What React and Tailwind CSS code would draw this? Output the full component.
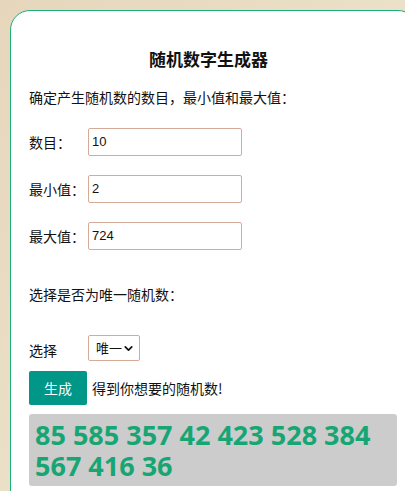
import { ChevronDown } from "lucide-react";

const ROWS = [
  { label: "数目：", value: "10" },
  { label: "最小值：", value: "2" },
  { label: "最大值：", value: "724" },
];

export default function App() {
  return (
    <div
      className="min-h-screen w-full overflow-hidden bg-gradient-to-br from-[#e6d6bc] via-[#ebe0c8] to-[#e4d5bb] pl-[10px] pt-[10px] text-[#111]"
      style={{ fontFamily: '"Noto Sans CJK SC", "Noto Sans", sans-serif' }}
    >
      <div className="w-[408px] rounded-[20px] border border-[#1dae7a] bg-white pb-10 pl-[18px] pr-[20px] pt-[36px]">
        <h1 className="pr-[9px] text-center text-[17px] font-bold leading-6">随机数字生成器</h1>
        <p className="mt-4 text-[14px] leading-5">确定产生随机数的数目，最小值和最大值：</p>

        <div className="mt-[21px] flex flex-col gap-[19px]">
          {ROWS.map((r) => (
            <div key={r.label} className="flex items-center">
              <span className="w-[59px] text-[14px] leading-5">{r.label}</span>
              <div className="flex h-[28px] w-[154px] items-center rounded-[2px] border border-[#d4ab98] pl-[3px] text-[13px]" style={{ fontFamily: '"Liberation Sans", Arial, sans-serif' }}>
                {r.value}
              </div>
            </div>
          ))}
        </div>

        <p className="mt-[34px] text-[14px] leading-5">选择是否为唯一随机数：</p>

        <div className="mt-[31px] flex items-center">
          <span className="w-[59px] pt-[3px] text-[14px] leading-5">选择</span>
          <div className="flex h-[26px] w-[52px] items-center justify-between rounded-[2px] border border-[#d4ab98] pl-[7px] pr-[4px] text-[13px]">
            <span>唯一</span>
            <ChevronDown className="h-[13px] w-[13px]" strokeWidth={3.2} />
          </div>
        </div>

        <div className="mt-[10px] flex items-center">
          <button className="h-[34px] w-[58px] rounded-[2px] bg-[#009688] text-[14px] text-white">生成</button>
          <span className="ml-[5px] text-[14px] leading-5">得到你想要的随机数!</span>
        </div>

        <div
          className="mt-[9px] rounded-[3px] bg-[#cccccc] pb-[5px] pl-[6px] pr-2 pt-[5px] text-[27px] font-bold leading-[31px] text-[#17a673]"
          style={{ fontFamily: '"Open Sans", "Noto Sans", sans-serif' }}
        >
          85 585 357 42 423 528 384 567 416 36
        </div>
      </div>
    </div>
  );
}
